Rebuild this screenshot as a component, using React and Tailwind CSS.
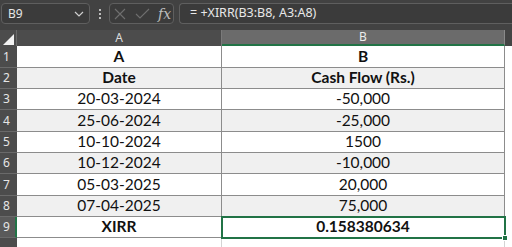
import React from "react";

const rows = [
  { n: 1, a: "A", b: "B", bold: true, h: "h-[22px]", shade: false },
  { n: 2, a: "Date", b: "Cash Flow (Rs.)", bold: true, h: "h-[21px]", shade: true },
  { n: 3, a: "20-03-2024", b: "-50,000", h: "h-[21px]", shade: false },
  { n: 4, a: "25-06-2024", b: "-25,000", h: "h-[22px]", shade: true },
  { n: 5, a: "10-10-2024", b: "1500", h: "h-[21px]", shade: false },
  { n: 6, a: "10-12-2024", b: "-10,000", h: "h-[21px]", shade: true },
  { n: 7, a: "05-03-2025", b: "20,000", h: "h-[22px]", shade: false },
  { n: 8, a: "07-04-2025", b: "75,000", h: "h-[21px]", shade: true },
  { n: 9, a: "XIRR", b: "0.158380634", bold: true, h: "h-[21px]", shade: false, selected: true },
];

const FormulaBar = () => (
  <div className="flex h-[30px] items-start gap-0 bg-[#424242] pt-[3px] font-['Noto_Sans',sans-serif]">
    <div className="ml-[1px] flex h-[21px] w-[89px] items-center justify-between rounded-[4px] border border-[#5f5f5f] bg-[#3b3b3b] pl-[6px] pr-[5px] text-[12px] text-[#e6e6e6]">
      <span>B9</span>
      <svg width="10" height="6" viewBox="0 0 10 6" fill="none" stroke="#cfcfcf" strokeWidth="1.2">
        <path d="M1 1l4 4 4-4" />
      </svg>
    </div>
    <div className="flex h-[21px] w-[19px] flex-col items-center justify-center gap-[2px]">
      <span className="h-[2px] w-[2px] bg-[#bdbdbd]" />
      <span className="h-[2px] w-[2px] bg-[#bdbdbd]" />
      <span className="h-[2px] w-[2px] bg-[#bdbdbd]" />
    </div>
    <div className="flex h-[21px] w-[65px] items-center rounded-[4px] border border-[#5f5f5f] bg-[#3b3b3b] pl-[4px]">
      <svg width="12" height="12" viewBox="0 0 12 12" stroke="#6f6f6f" strokeWidth="1.1" fill="none">
        <path d="M1 1l10 10M11 1L1 11" />
      </svg>
      <svg className="ml-[9px]" width="15" height="11" viewBox="0 0 15 11" stroke="#6f6f6f" strokeWidth="1.1" fill="none">
        <path d="M1 6l4 4 9-9" />
      </svg>
      <span className="ml-[8px] font-['DejaVu_Serif',serif] text-[14px] italic leading-none text-[#bdbdbd]">
        fx
      </span>
    </div>
    <div className="ml-[5px] flex h-[21px] flex-1 items-center rounded-l-[4px] border border-r-0 border-[#5f5f5f] bg-[#3b3b3b] pl-[10px] text-[12.5px] text-[#e8e8e8]">
      = +XIRR(B3:B8, A3:A8)
    </div>
  </div>
);

export default function App() {
  return (
    <div className="relative h-[247px] w-[512px] overflow-hidden bg-white">
      <FormulaBar />
      {/* column headers */}
      <div className="flex h-[16px] bg-[#444444] font-['Noto_Sans',sans-serif] text-[12px] leading-none">
        <div className="relative w-[17px] border-r border-[#6a6a6a] bg-[#4c4c4c]">
          <svg className="absolute bottom-[1px] right-[2px]" width="11" height="11" viewBox="0 0 11 11">
            <path d="M11 0V11H0z" fill="#f2f2f2" />
          </svg>
        </div>
        <div className="flex w-[205px] items-center justify-center border-r border-[#7a7a7a] bg-[#4c4c4c] text-[#dcdcdc]">
          A
        </div>
        <div className="flex w-[283px] items-center justify-center border-b-2 border-r border-b-[#217346] border-r-[#8a8a8a] bg-[#6b6b6b] text-[#ececec]">
          B
        </div>
      </div>
      {/* rows */}
      {rows.map((r) => (
        <div key={r.n} className={`flex ${r.h} font-['Lato',sans-serif] text-[15.5px] text-[#111]`}>
          <div
            className={`flex w-[17px] items-center border-b border-[#6a6a6a] pl-[3px] font-['Noto_Sans',sans-serif] text-[12px] text-[#e6e6e6] ${
              r.selected ? "border-r-2 border-r-[#217346] bg-[#5a5a5a]" : "bg-[#4c4c4c]"
            }`}
          >
            {r.n}
          </div>
          <div
            className={`flex w-[205px] items-center justify-center border-b border-r border-[#8c8c8c] ${
              r.shade ? "bg-[#f0f0f0]" : "bg-white"
            } ${r.bold ? "font-bold" : ""}`}
          >
            {r.a}
          </div>
          <div
            className={`flex w-[283px] items-center justify-center border-b border-r border-[#8c8c8c] ${
              r.shade ? "bg-[#f0f0f0]" : "bg-white"
            } ${r.bold ? "font-bold" : ""}`}
          >
            {r.b}
          </div>
          <div className="flex-1 bg-white" />
        </div>
      ))}
      <div className="flex h-[9px]">
        <div className="w-[17px] bg-[#4c4c4c]" />
        <div className="w-[205px] border-r border-[#d4d4d4]" />
        <div className="w-[283px] border-r border-[#d4d4d4]" />
      </div>
      {/* selected cell B9 */}
      <div className="pointer-events-none absolute left-[221px] top-[216px] h-[23px] w-[285px] border-2 border-[#217346]" />
      <div className="absolute left-[502px] top-[235px] h-[6px] w-[6px] border border-white bg-[#217346]" />
    </div>
  );
}
